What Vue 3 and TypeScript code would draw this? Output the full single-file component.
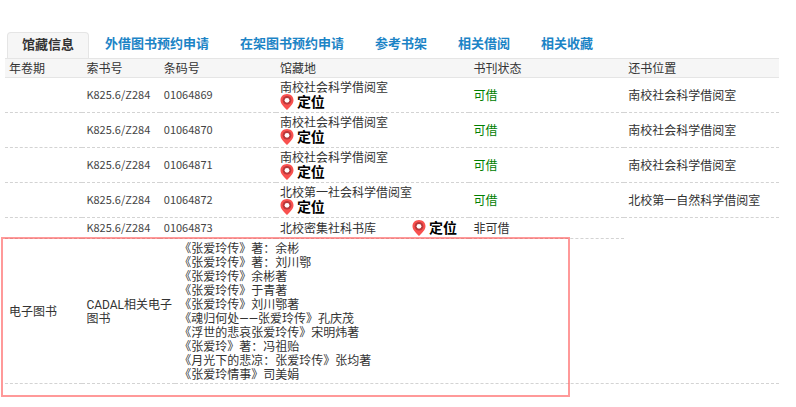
<script setup lang="ts">
import { ref } from 'vue'

interface Holding {
  callNo: string
  barcode: string
  location: string
  available: boolean
  returnTo?: string
}

const tabs: string[] = ['馆藏信息', '外借图书预约申请', '在架图书预约申请', '参考书架', '相关借阅', '相关收藏']
const active = ref(0)

const columns: string[] = ['年卷期', '索书号', '条码号', '馆藏地', '书刊状态', '还书位置']

const holdings: Holding[] = [
  { callNo: 'K825.6/Z284', barcode: '01064869', location: '南校社会科学借阅室', available: true, returnTo: '南校社会科学借阅室' },
  { callNo: 'K825.6/Z284', barcode: '01064870', location: '南校社会科学借阅室', available: true, returnTo: '南校社会科学借阅室' },
  { callNo: 'K825.6/Z284', barcode: '01064871', location: '南校社会科学借阅室', available: true, returnTo: '南校社会科学借阅室' },
  { callNo: 'K825.6/Z284', barcode: '01064872', location: '北校第一社会科学借阅室', available: true, returnTo: '北校第一自然科学借阅室' },
  { callNo: 'K825.6/Z284', barcode: '01064873', location: '北校密集社科书库', available: false },
]

const ebooks: string[] = [
  '《张爱玲传》著：余彬',
  '《张爱玲传》著：刘川鄂',
  '《张爱玲传》余彬著',
  '《张爱玲传》于青著',
  '《张爱玲传》刘川鄂著',
  '《魂归何处——张爱玲传》孔庆茂',
  '《浮世的悲哀张爱玲传》宋明炜著',
  '《张爱玲》著：冯祖贻',
  '《月光下的悲凉：张爱玲传》张均著',
  '《张爱玲情事》司美娟',
]
</script>

<template>
  <main class="page">
    <nav class="tabs">
      <a
        v-for="(tab, i) in tabs"
        :key="tab"
        href="#"
        class="tab"
        :class="{ active: i === active }"
        @click.prevent="active = i"
      >{{ tab }}</a>
    </nav>

    <table class="grid">
      <colgroup>
        <col class="w10" /><col class="w10" /><col class="w15" /><col class="w25" /><col class="w20" /><col class="w20" />
      </colgroup>
      <thead>
        <tr>
          <th v-for="c in columns" :key="c" scope="col">{{ c }}</th>
        </tr>
      </thead>
      <tbody>
        <tr v-for="h in holdings" :key="h.barcode">
          <td></td>
          <td class="latin">{{ h.callNo }}</td>
          <td class="latin">{{ h.barcode }}</td>
          <td>
            <div class="place">
              <span>{{ h.location }}</span>
              <a href="#" class="locate" @click.prevent>
                <svg class="pin" viewBox="0 0 14 16" aria-hidden="true">
                  <path d="M7 0C3.1 0 .5 2.8.5 6.3c0 3.4 3 6.2 6.5 9.7 3.5-3.5 6.5-6.3 6.5-9.7C13.5 2.8 10.9 0 7 0z" fill="#f9514f" />
                  <circle cx="7" cy="6.3" r="4.3" fill="#b9383a" />
                  <circle cx="7" cy="6.3" r="2.4" fill="#fff" />
                </svg>
                <span>定位</span>
              </a>
            </div>
          </td>
          <td :class="{ ok: h.available }">{{ h.available ? '可借' : '非可借' }}</td>
          <td v-if="h.returnTo">{{ h.returnTo }}</td>
        </tr>
      </tbody>
    </table>

    <section class="ebooks">
      <table class="grid">
        <colgroup>
          <col class="w10" /><col class="w12" /><col />
        </colgroup>
        <tbody>
          <tr>
            <td>电子图书</td>
            <td>CADAL相关电子图书</td>
            <td>
              <ul class="titles">
                <li v-for="b in ebooks" :key="b">{{ b }}</li>
              </ul>
            </td>
          </tr>
        </tbody>
      </table>
      <div class="highlight"></div>
    </section>
  </main>
</template>

<style>
body {
  margin: 0;
  background: #fff;
}
</style>

<style scoped>
.page {
  padding: 32px 17px 24px 5px;
  color: #333;
  font: 12px/14px Roboto, 'Noto Sans CJK SC', sans-serif;
}

.tabs {
  display: flex;
  height: 26px;
  padding-left: 2px;
}

.tab {
  margin-right: 1px;
  padding: 0 15px;
  color: #1c84c6;
  font-size: 13px;
  font-weight: 700;
  line-height: 24px;
  text-decoration: none;
  white-space: nowrap;
}

.tab.active {
  padding: 0 14px;
  border: 1px solid #e5e5e5;
  border-bottom: 0;
  border-radius: 4px 4px 0 0;
  background: #f6f6f6;
  color: #333;
}

.grid {
  width: 100%;
  border-spacing: 0;
  table-layout: fixed;
}

.w10 { width: 10%; }
.w12 { width: 12%; }
.w15 { width: 15%; }
.w20 { width: 20%; }
.w25 { width: 25%; }

th {
  padding: 3px 0 1px 4px;
  border-top: 1px solid #e5e5e5;
  border-bottom: 1px solid #e5e5e5;
  background: #f6f6f6;
  font-weight: 400;
  text-align: left;
}

td {
  padding: 3px 0 1px 4px;
  border-bottom: 1px dashed #d3d3d3;
  vertical-align: middle;
}

.latin {
  padding: 1px 0 3px 4px;
  color: #444;
  font-family: 'Noto Sans CJK SC', sans-serif;
  font-size: 11px;
}

.ok {
  color: #008000;
}

.place {
  display: flex;
  flex-wrap: wrap;
  align-items: center;
  padding-right: 4px;
  column-gap: 36px;
}

.locate {
  display: flex;
  align-items: center;
  gap: 3px;
  height: 14px;
  margin-bottom: 2px;
  color: #000;
  font-size: 14px;
  font-weight: 700;
  text-decoration: none;
  white-space: nowrap;
}

.pin {
  width: 14px;
  height: 16px;
}

.ebooks {
  position: relative;
}

.highlight {
  position: absolute;
  top: -2px;
  bottom: -13px;
  left: -4px;
  width: 73%;
  border: 2px solid rgba(255, 60, 60, 0.52);
  pointer-events: none;
}

.titles {
  margin: 0;
  padding: 0;
  list-style: none;
}
</style>
